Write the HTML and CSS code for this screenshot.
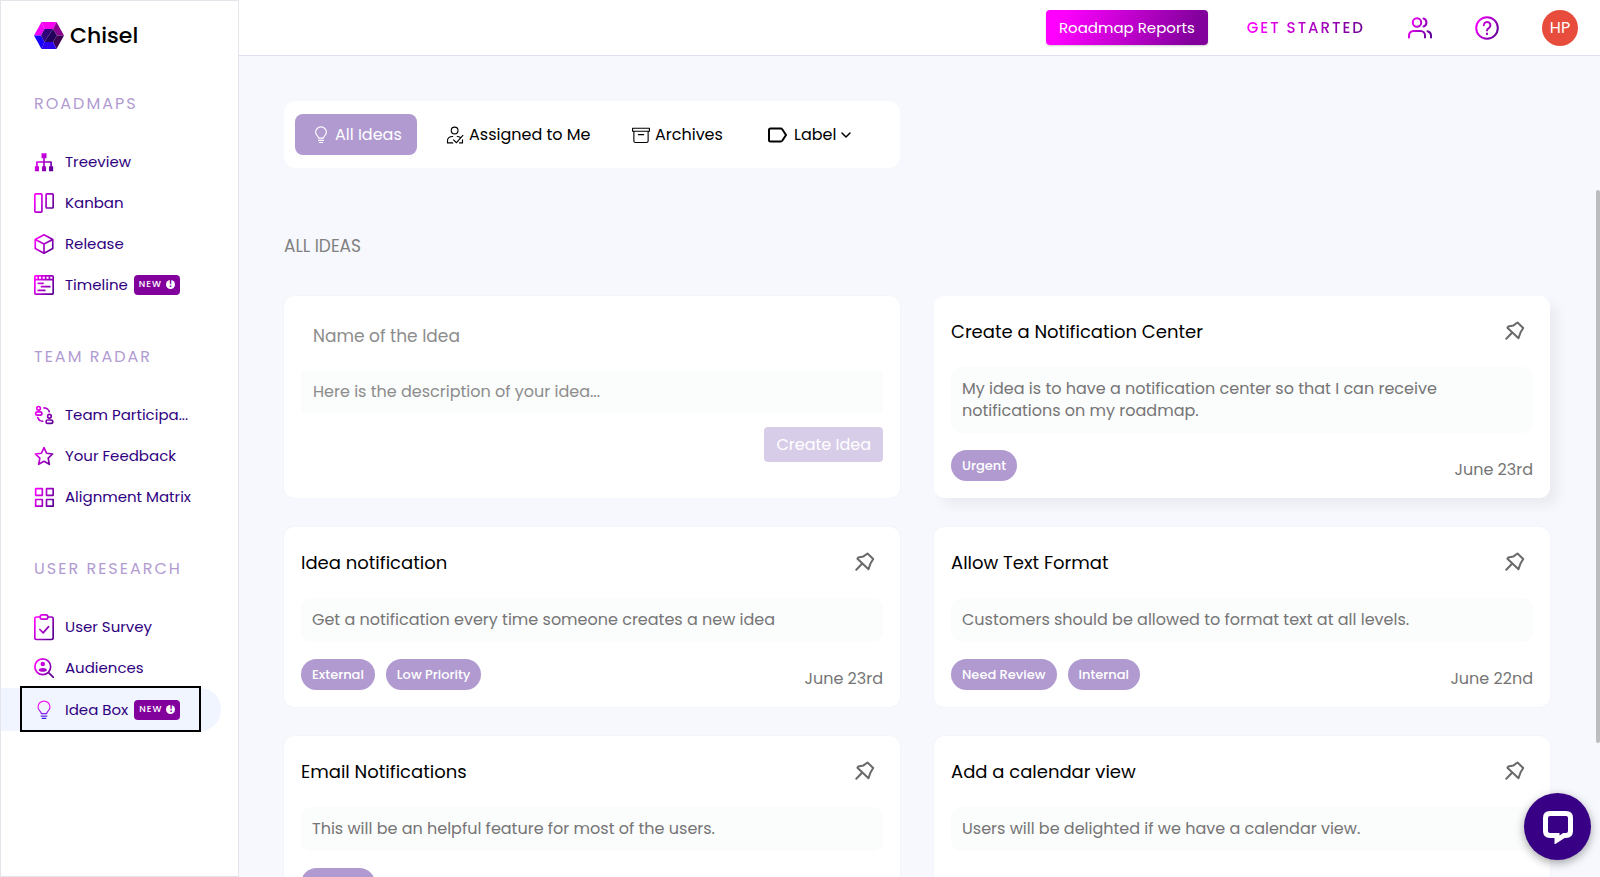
FILE: index.html
```html
<!DOCTYPE html>
<html lang="en">
<head>
    <meta charset="UTF-8">
    <meta name="viewport" content="width=device-width, initial-scale=1.0">
    <title>Chisel - Idea Box</title>
    <link rel="stylesheet" href="styles.css">
</head>
<body>
    <!-- shared gradients and icons -->
    <svg class="defs" width="0" height="0" aria-hidden="true">
        <defs>
            <linearGradient id="grad" gradientUnits="userSpaceOnUse" x1="0" y1="6" x2="24" y2="18">
                <stop offset="0" stop-color="#ff00ff"/>
                <stop offset="1" stop-color="#5a0094"/>
            </linearGradient>
            <linearGradient id="gradDown" gradientUnits="userSpaceOnUse" x1="0" y1="2" x2="0" y2="22">
                <stop offset="0.3" stop-color="#f020f0"/>
                <stop offset="1" stop-color="#3a20e0"/>
            </linearGradient>
            <symbol id="pin" viewBox="0 0 20 20">
                <path d="M12.500 1.500 18.200 7 15.500 11.500 13.500 17.200 2.400 6.800 3.200 5.600 8.500 4.400z M7 11.800 1.300 17.800"/>
            </symbol>
            <symbol id="bulb" viewBox="0 0 24 24">
                <path d="M8.800 16.200C8.800 13.600 4.800 12.600 4.800 8.400a7.200 7.200 0 0 1 14.400 0c0 4.200-4 5.200-4 7.800zM8.600 19.200h6.800M9.800 22h4.400"/>
            </symbol>
        </defs>
    </svg>

    <aside class="sidebar">
        <a class="logo" href="#">
            <svg width="30" height="27" viewBox="0 0 30 27">
                <path fill="#f800f0" d="M7.500 0h15l-3.500 7h-8.500z"/>
                <path fill="#f000f8" d="M7.500 0 0 13.500h7L10.500 7z"/>
                <path fill="#8a0090" d="M22.500 0 30 13.500h-7L19 7z"/>
                <path fill="#3c0054" d="M30 13.500 22.500 27 19 20l4-6.500z"/>
                <path fill="#2c00f0" d="M22.500 27h-15l3-7H19z"/>
                <path fill="#1600ff" d="M7.500 27 0 13.500h7l3.500 6.500z"/>
                <path fill="#30007a" d="M10.500 7H19l-4.500 6.500L10.500 20 7 13.500z"/>
                <path fill="#22005c" d="M19 7l4 6.500-4 6.500h-8.500l4-6.500z"/>
            </svg>
            <span>Chisel</span>
        </a>

        <nav>
            <h2>ROADMAPS</h2>
            <ul>
                <li><a href="#">
                    <svg class="icon" viewBox="0 0 24 24"><path d="M12 7v10M3.500 17v-5h17v5"/><path class="solid" d="M9 1.500h6v6H9zM1 17h5v6H1zM9.500 17h5v6h-5zM18 17h5v6h-5z"/></svg>
                    Treeview</a></li>
                <li><a href="#">
                    <svg class="icon" viewBox="0 0 24 24"><rect x="1" y="1" width="8.500" height="22" rx="1"/><rect x="14.500" y="1" width="8.500" height="17" rx="1"/></svg>
                    Kanban</a></li>
                <li><a href="#">
                    <svg class="icon" viewBox="0 0 24 24"><path d="M12 1 22.500 6.500v11L12 23.200 1.500 17.500v-11zM1.500 6.500 12 12l10.500-5.500M12 12v11"/></svg>
                    Release</a></li>
                <li><a href="#">
                    <svg class="icon" viewBox="0 0 24 24"><rect x="1" y="1" width="22" height="22" rx="1"/><path d="M1 5.500h22M5 1v4M9.500 1v4M14 1v4M18.500 1v4M5 10h6M9 14h10M5 18.500h8"/></svg>
                    Timeline <span class="new">NEW <i>!</i></span></a></li>
            </ul>

            <h2>TEAM RADAR</h2>
            <ul>
                <li><a href="#">
                    <svg class="icon" viewBox="0 0 24 24"><circle cx="5.500" cy="4" r="2.200"/><rect x="2" y="8.200" width="7.500" height="4" rx="2"/><circle cx="18.500" cy="13.500" r="2.200"/><rect x="14.500" y="18" width="8" height="4" rx="2"/><path d="M12 3.500c3 0 5.500 1.600 6.300 4.500M4.500 15c.7 2.800 3 4.500 6 4.500" stroke-dasharray="5 2"/></svg>
                    Team Participa...</a></li>
                <li><a href="#">
                    <svg class="icon" viewBox="0 0 24 24"><path d="M12 2l3.100 6.700 7.200.9-5.300 5 1.400 7.400L12 18.400 5.600 22 7 14.600l-5.300-5 7.200-.9z"/></svg>
                    Your Feedback</a></li>
                <li><a href="#">
                    <svg class="icon" viewBox="0 0 24 24"><path d="M2 2h8v8H2zM15 2h8v8h-8zM2 15h8v8H2zM15 15h8v8h-8z"/></svg>
                    Alignment Matrix</a></li>
            </ul>

            <h2>USER RESEARCH</h2>
            <ul>
                <li><a href="#">
                    <svg class="icon tall" viewBox="0 -3 24 32"><rect x="1" y="1" width="22" height="27" rx="2"/><rect class="blank" x="7.500" y="-1.500" width="9" height="5" rx="2"/><path d="M7 16l4 4 6.500-7.500"/></svg>
                    User Survey</a></li>
                <li><a href="#">
                    <svg class="icon" viewBox="0 0 24 24"><circle cx="10.500" cy="10.500" r="9.500"/><path d="M17.500 17.500 23.500 23.500"/><path class="solid" d="M10.500 4.500a2.700 2.700 0 1 1 0 5.400 2.700 2.700 0 0 1 0-5.400zM5.500 15c0-4 10-4 10 0-2 2-8 2-10 0z"/></svg>
                    Audiences</a></li>
                <li class="current"><a href="#">
                    <svg class="icon down" viewBox="0 0 24 24"><use href="#bulb"/></svg>
                    Idea Box <span class="new">NEW <i>!</i></span></a></li>
            </ul>
        </nav>
    </aside>

    <div class="page">
        <header>
            <button class="reports">Roadmap Reports</button>
            <a class="started" href="#">GET STARTED</a>
            <button class="plain" aria-label="People">
                <svg class="icon big" viewBox="0 0 24 24"><circle cx="9" cy="6.500" r="4.200"/><path d="M1 21.500v-2a4.500 4.500 0 0 1 4.500-4.500h7a4.500 4.500 0 0 1 4.500 4.500v2M15.500 2.500a4.200 4.200 0 0 1 0 8M19.500 15.200a4.500 4.500 0 0 1 3.500 4.300v2"/></svg>
            </button>
            <button class="plain" aria-label="Help">
                <svg class="icon big" viewBox="0 0 24 24"><circle cx="12" cy="12" r="10.800"/><path d="M8.800 9.200a3.300 3.300 0 1 1 5 2.900c-1.200.7-1.800 1.200-1.800 2.400M12 17.500v.8"/></svg>
            </button>
            <button class="avatar">HP</button>
        </header>

        <main>
            <div class="tabs">
                <button class="tab active">
                    <svg class="line" width="18" height="18" viewBox="0 0 24 24"><use href="#bulb"/></svg>
                    All Ideas
                </button>
                <button class="tab assigned">
                    <svg class="line" width="18" height="18" viewBox="0 0 24 24"><circle cx="11.500" cy="6" r="4.500"/><path d="M9 14c-4 0-7 2.200-7 5.500V22.500h7M15 14c1.500 0 2.600.4 3.800 1M10 18.500l4 3.800 8.500-9.800M18 22.500h4v-4"/></svg>
                    Assigned to Me
                </button>
                <button class="tab archives">
                    <svg class="line" width="18" height="18" viewBox="0 0 24 24"><path d="M.8 3h22.400v4H.8zM2.500 7v13q0 2 2 2h15q2 0 2-2V7M8.500 11.500h7"/></svg>
                    Archives
                </button>
                <button class="tab label">
                    <svg class="line thick" width="19" height="16" viewBox="0 0 19 16"><path d="M2.500 1.500h10.200q1 0 1.700 1L18 8l-3.600 5.500q-.7 1-1.700 1H2.500q-1.500 0-1.500-1.500V3q0-1.500 1.500-1.500z"/></svg>
                    <span>Label</span>
                    <svg class="line chevron" width="10" height="8" viewBox="0 0 10 8"><path d="M1 2l4 4 4-4"/></svg>
                </button>
            </div>

            <h1>ALL IDEAS</h1>

            <div class="ideas">
                <form class="card idea-form">
                    <input type="text" aria-label="Name of the Idea" placeholder="Name of the Idea">
                    <textarea rows="1" aria-label="Description" placeholder="Here is the description of your idea..."></textarea>
                    <button type="button">Create Idea</button>
                </form>

                <article class="card raised">
                    <div class="card-head">
                        <h3>Create a Notification Center</h3>
                        <button class="pin" aria-label="Pin"><svg width="20" height="20"><use href="#pin"/></svg></button>
                    </div>
                    <p>My idea is to have a notification center so that I can receive<br>notifications on my roadmap.</p>
                    <div class="card-foot">
                        <span class="tag">Urgent</span>
                        <time>June 23rd</time>
                    </div>
                </article>

                <article class="card">
                    <div class="card-head">
                        <h3>Idea notification</h3>
                        <button class="pin" aria-label="Pin"><svg width="20" height="20"><use href="#pin"/></svg></button>
                    </div>
                    <p>Get a notification every time someone creates a new idea</p>
                    <div class="card-foot">
                        <span class="tag">External</span>
                        <span class="tag">Low Priority</span>
                        <time>June 23rd</time>
                    </div>
                </article>

                <article class="card">
                    <div class="card-head">
                        <h3>Allow Text Format</h3>
                        <button class="pin" aria-label="Pin"><svg width="20" height="20"><use href="#pin"/></svg></button>
                    </div>
                    <p>Customers should be allowed to format text at all levels.</p>
                    <div class="card-foot">
                        <span class="tag">Need Review</span>
                        <span class="tag">Internal</span>
                        <time>June 22nd</time>
                    </div>
                </article>

                <article class="card">
                    <div class="card-head">
                        <h3>Email Notifications</h3>
                        <button class="pin" aria-label="Pin"><svg width="20" height="20"><use href="#pin"/></svg></button>
                    </div>
                    <p>This will be an helpful feature for most of the users.</p>
                    <div class="card-foot">
                        <span class="tag">External</span>
                    </div>
                </article>

                <article class="card">
                    <div class="card-head">
                        <h3>Add a calendar view</h3>
                        <button class="pin" aria-label="Pin"><svg width="20" height="20"><use href="#pin"/></svg></button>
                    </div>
                    <p>Users will be delighted if we have a calendar view.</p>
                    <div class="card-foot"></div>
                </article>
            </div>
        </main>
        <div class="scrollbar"></div>
    </div>

    <button class="chat" aria-label="Open chat">
        <svg width="34" height="34" viewBox="0 0 34 34"><path d="M9 3.500h16q4.500 0 4.500 4.500v13q0 4.500-4.500 4.500h-2L16 30v-4.500H9q-4.500 0-4.500-4.500V8q0-4.500 4.500-4.500z"/></svg>
    </button>
</body>
</html>
```
FILE: styles.css
```css
* {
    box-sizing: border-box;
}
body {
    margin: 0;
    height: 100vh;
    display: flex;
    overflow: hidden;
    font-family: Poppins, Inter, sans-serif;
    font-size: 16px;
    color: #000;
    background: #f7f8fe;
}
h1, h2, h3, p, ul {
    margin: 0;
    padding: 0;
    font-weight: 400;
}
a {
    color: inherit;
    text-decoration: none;
}
button, input, textarea {
    font: inherit;
    color: inherit;
    border: 0;
    padding: 0;
    background: none;
}
button {
    cursor: pointer;
}
.defs {
    position: absolute;
}

/* sidebar */
.sidebar {
    flex: 0 0 239px;
    background: #fff;
    border: 1px solid #e6e4ea;
}
.logo {
    display: flex;
    align-items: center;
    gap: 6px;
    height: 68px;
    padding-left: 33px;
    font-size: 22px;
    font-weight: 500;
}
.sidebar h2 {
    margin: 40px 0 25px 33px;
    font-size: 16px;
    line-height: 24px;
    letter-spacing: 2px;
    color: #b19bd1;
}
.sidebar .logo + nav h2:first-child {
    margin-top: 23px;
}
.sidebar ul {
    list-style: none;
}
.sidebar li a {
    display: flex;
    align-items: center;
    gap: 11px;
    height: 41px;
    padding-left: 33px;
    font-size: 15px;
    color: #2f0080;
}
.sidebar .current {
    position: relative;
    margin-right: 17px;
    border-radius: 0 21px 21px 0;
    background: #f0f5ff;
}
.sidebar .current a {
    height: 43px;
}
/* focus frame round the open page */
.sidebar .current::after {
    content: '';
    position: absolute;
    top: -2px;
    bottom: -1px;
    left: 19px;
    right: 20px;
    border: 2px solid #000;
}
.icon {
    flex: none;
    width: 20px;
    height: 20px;
    fill: none;
    stroke: url(#grad);
    stroke-width: 2;
    stroke-linecap: round;
    stroke-linejoin: round;
}
.icon .solid {
    fill: url(#grad);
    stroke: none;
}
.icon .blank {
    fill: #fff;
}
.icon.tall {
    height: 28px;
}
.icon.down {
    stroke: url(#gradDown);
    stroke-width: 1.5;
}
.icon.big {
    width: 24px;
    height: 24px;
    display: block;
}
.new {
    display: flex;
    align-items: center;
    gap: 4px;
    height: 20px;
    margin-left: -5px;
    padding: 0 5px;
    border-radius: 4px;
    background: #82009c;
    color: #fff;
    font-size: 9px;
    font-weight: 500;
    letter-spacing: 1px;
}
.new i {
    width: 9px;
    height: 9px;
    border-radius: 50%;
    background: #fff;
    color: #82009c;
    font-size: 8px;
    font-style: normal;
    font-weight: 700;
    line-height: 9px;
    letter-spacing: 0;
    text-align: center;
}

/* top bar */
.page {
    position: relative;
    flex: 1;
    min-width: 0;
    display: flex;
    flex-direction: column;
}
header {
    flex: none;
    display: flex;
    align-items: center;
    justify-content: flex-end;
    gap: 43px;
    height: 56px;
    padding-right: 22px;
    border-bottom: 1px solid #e4def2;
    background: #fff;
}
.reports {
    height: 35px;
    padding: 0 13px;
    margin-right: -4px;
    border-radius: 4px;
    background: linear-gradient(110deg, #ff00ff 10%, #82009c 90%);
    color: #fff;
    font-size: 15px;
    box-shadow: 0 1px 2px rgba(0, 0, 0, 0.2);
}
.started {
    font-size: 15px;
    font-weight: 500;
    letter-spacing: 2px;
    background: linear-gradient(90deg, #ff00ff, #6a0090);
    -webkit-background-clip: text;
    background-clip: text;
    color: transparent;
}
.avatar {
    width: 36px;
    height: 36px;
    border-radius: 50%;
    background: #e74c3c;
    color: #fff;
}

/* content */
main {
    flex: 1;
    min-height: 0;
    padding: 45px 50px 45px 45px;
    overflow-y: auto;
    scrollbar-width: none;
}
.tabs {
    display: flex;
    align-items: center;
    width: calc(50% - 17px);
    height: 67px;
    padding-left: 11px;
    border-radius: 12px;
    background: #fff;
}
.tab {
    display: flex;
    align-items: center;
    gap: 5px;
    height: 41px;
    white-space: nowrap;
}
.tab.active {
    width: 122px;
    padding-left: 17px;
    border-radius: 8px;
    background: #b09ad0;
    color: #fff;
}
.tab.assigned {
    width: 185px;
    padding-left: 29px;
}
.tab.archives {
    width: 136px;
    padding-left: 30px;
}
.tab.label {
    padding-left: 30px;
    gap: 7px;
}
.line {
    flex: none;
    fill: none;
    stroke: currentColor;
    stroke-width: 1.5;
    stroke-linecap: round;
    stroke-linejoin: round;
}
.line.thick {
    stroke-width: 2;
}
.chevron {
    margin-left: -2px;
}
h1 {
    margin: 66px 0 38px;
    font-size: 17px;
    line-height: 24px;
    color: #808080;
}
.ideas {
    display: grid;
    grid-template-columns: 1fr 1fr;
    gap: 29px 34px;
}
.card {
    padding: 17px;
    border-radius: 10px;
    background: #fff;
    box-shadow: 0 0 2px rgba(0, 0, 0, 0.05);
}
.card.raised {
    box-shadow: 8px 8px 12px rgba(0, 0, 0, 0.05);
}
.card-head {
    display: flex;
    align-items: center;
    justify-content: space-between;
    height: 36px;
    margin-bottom: 18px;
    padding-right: 8px;
}
.card h3 {
    font-size: 18px;
}
.pin svg {
    display: block;
    fill: none;
    stroke: #6a6a6a;
    stroke-width: 2;
    stroke-linecap: round;
    stroke-linejoin: round;
}
.card p {
    padding: 11px;
    border-radius: 10px;
    background: #fbfcfc;
    color: #757575;
    line-height: 22px;
}
.card-foot {
    display: flex;
    align-items: flex-end;
    gap: 11px;
    min-height: 31px;
    margin-top: 17px;
}
.tag {
    padding: 0 11px;
    border-radius: 16px;
    background: #b09ad0;
    color: #fff;
    font-size: 13px;
    font-weight: 500;
    line-height: 31px;
}
.card time {
    margin-left: auto;
    line-height: 22px;
    color: #757575;
}
.idea-form {
    display: flex;
    flex-direction: column;
}
.idea-form input {
    height: 46px;
    padding: 0 12px;
    font-size: 17px;
}
.idea-form textarea {
    height: 42px;
    margin: 12px 0 14px;
    padding: 10px 12px;
    border-radius: 4px;
    background: #fbfcfc;
    line-height: 22px;
    resize: none;
}
.idea-form ::placeholder {
    color: #8c8c8c;
}
.idea-form button {
    align-self: flex-end;
    height: 35px;
    padding: 0 12px;
    border-radius: 4px;
    background: #d8cde8;
    color: #fff;
}
.scrollbar {
    position: absolute;
    top: 190px;
    right: 0;
    width: 4px;
    height: 63%;
    border-radius: 2px;
    background: #bdbdbd;
}

/* chat launcher */
.chat {
    position: fixed;
    right: 9px;
    bottom: 17px;
    display: flex;
    align-items: center;
    justify-content: center;
    width: 67px;
    height: 67px;
    border-radius: 50%;
    background: #380084;
    box-shadow: 0 3px 10px rgba(0, 0, 0, 0.35);
}
.chat svg {
    fill: none;
    stroke: #fff;
    stroke-width: 5;
}
```
